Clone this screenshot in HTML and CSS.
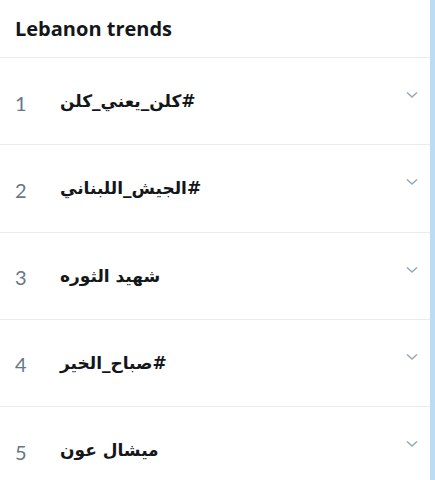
FILE: index.html
```html
<!DOCTYPE html>
<html lang="en">
<head>
  <meta charset="UTF-8" />
  <meta name="viewport" content="width=device-width, initial-scale=1.0" />
  <title>Lebanon trends</title>
  <link rel="stylesheet" href="styles.css">
</head>
<body>
  <div class="page">
    <div class="trends">
      <header class="trends-header">
        <h2>Lebanon trends</h2>
      </header>
      <div class="trend">
        <span class="rank">1</span>
        <span class="name" dir="rtl">#كلن_يعني_كلن</span>
        <svg class="chevron" viewBox="0 0 12 8"><path d="M1 1.5l5 4.5 5-4.5" /></svg>
      </div>
      <div class="trend">
        <span class="rank">2</span>
        <span class="name" dir="rtl">#الجيش_اللبناني</span>
        <svg class="chevron" viewBox="0 0 12 8"><path d="M1 1.5l5 4.5 5-4.5" /></svg>
      </div>
      <div class="trend">
        <span class="rank">3</span>
        <span class="name" dir="rtl">شهيد الثوره</span>
        <svg class="chevron" viewBox="0 0 12 8"><path d="M1 1.5l5 4.5 5-4.5" /></svg>
      </div>
      <div class="trend">
        <span class="rank">4</span>
        <span class="name" dir="rtl">#صباح_الخير</span>
        <svg class="chevron" viewBox="0 0 12 8"><path d="M1 1.5l5 4.5 5-4.5" /></svg>
      </div>
      <div class="trend">
        <span class="rank">5</span>
        <span class="name" dir="rtl">ميشال عون</span>
        <svg class="chevron" viewBox="0 0 12 8"><path d="M1 1.5l5 4.5 5-4.5" /></svg>
      </div>
    </div>
    <div class="scrollbar"></div>
  </div>
</body>
</html>
```

FILE: styles.css
```css
body {
  margin: 0;
  background: #fff;
  font-family: "Open Sans", "Noto Sans", "DejaVu Sans", sans-serif;
  color: #14171a;
}
.page {
  display: flex;
  height: 480px;
  overflow: hidden;
}
.trends {
  flex: 1;
}
.scrollbar {
  width: 5px;
  background: #bcdcf6;
}
.trends-header {
  height: 57px;
  border-bottom: 1px solid #e6ecf0;
  display: flex;
  align-items: center;
  padding: 0 15px;
}
.trends-header h2 {
  margin: 0;
  font-size: 20px;
  font-weight: 700;
  padding-bottom: 1px;
}
.trend {
  height: 86.25px;
  border-bottom: 1px solid #e6ecf0;
  display: flex;
  align-items: center;
  padding: 0 12px 0 15px;
}
.rank {
  width: 45px;
  font-family: Lato, sans-serif;
  font-size: 20px;
  color: #657786;
  padding-top: 3px;
}
.name {
  flex: 1;
  text-align: left;
  font-family: "DejaVu Sans", sans-serif;
  font-size: 17px;
  font-weight: 700;
}
.chevron {
  width: 12px;
  height: 8px;
  margin-bottom: 12px;
  fill: none;
  stroke: #9aa8b3;
  stroke-width: 1.6;
}
```
